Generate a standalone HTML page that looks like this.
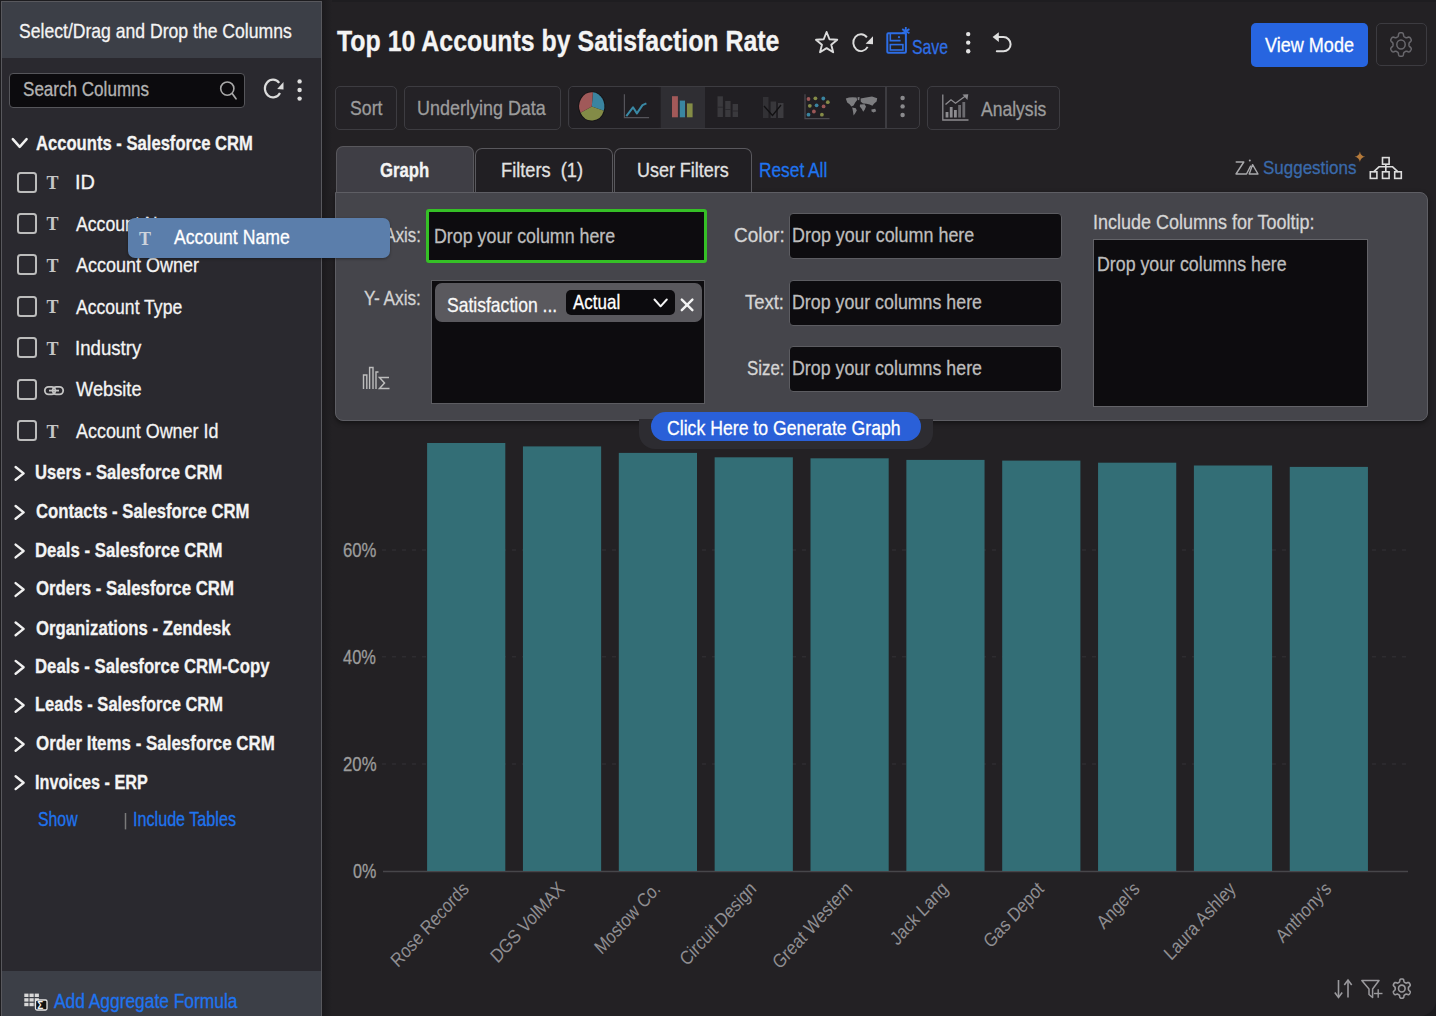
<!DOCTYPE html>
<html><head><meta charset="utf-8"><style>
html,body{margin:0;padding:0;width:1436px;height:1016px;overflow:hidden;background:#232124}
body{position:relative;font-family:"Liberation Sans",sans-serif}
.t{position:absolute;white-space:nowrap;line-height:1.117;transform-origin:0 0;-webkit-text-stroke:0.3px currentColor}
</style></head><body>
<div style="position:absolute;left:322px;top:0px;width:1114px;height:1.5px;background:#1e1d20"></div>
<div style="position:absolute;left:0px;top:0px;width:322px;height:1016px;background:#1d1c1f"></div>
<div style="position:absolute;left:1px;top:1px;width:321px;height:1015px;background:#2a292f;border:1px solid #58585d;border-bottom:none;box-sizing:border-box"></div>
<div style="position:absolute;left:2px;top:2px;width:319px;height:56px;background:#3c3f47"></div>
<div style="position:absolute;left:2px;top:971px;width:319px;height:45px;background:#3c3f47"></div>
<div style="position:absolute;left:322px;top:0px;width:10px;height:1016px;background:linear-gradient(to right,#1b1a1d,#232124)"></div>
<div style="position:absolute;left:8.5px;top:73px;width:236.5px;height:35px;background:#0c0b0e;border:1.5px solid #56565b;border-radius:4px;box-sizing:border-box"></div>
<div style="position:absolute;left:17px;top:171.5px;width:20px;height:21px;border:2px solid #bcbcbc;border-radius:3.5px;box-sizing:border-box"></div>
<div style="position:absolute;left:17px;top:212.98px;width:20px;height:21px;border:2px solid #bcbcbc;border-radius:3.5px;box-sizing:border-box"></div>
<div style="position:absolute;left:17px;top:254.45999999999998px;width:20px;height:21px;border:2px solid #bcbcbc;border-radius:3.5px;box-sizing:border-box"></div>
<div style="position:absolute;left:17px;top:295.94px;width:20px;height:21px;border:2px solid #bcbcbc;border-radius:3.5px;box-sizing:border-box"></div>
<div style="position:absolute;left:17px;top:337.41999999999996px;width:20px;height:21px;border:2px solid #bcbcbc;border-radius:3.5px;box-sizing:border-box"></div>
<div style="position:absolute;left:17px;top:378.9px;width:20px;height:21px;border:2px solid #bcbcbc;border-radius:3.5px;box-sizing:border-box"></div>
<div style="position:absolute;left:17px;top:420.38px;width:20px;height:21px;border:2px solid #bcbcbc;border-radius:3.5px;box-sizing:border-box"></div>
<div style="position:absolute;left:1406px;top:986px;width:30px;height:30px;background:#1c1b1e"></div>
<div style="position:absolute;left:1406px;top:986px;width:30px;height:30px;background:#232124;border-bottom-right-radius:16px"></div>
<div style="position:absolute;left:1250.6px;top:22.8px;width:117.6px;height:44px;background:#2765e0;border-radius:5px"></div>
<div style="position:absolute;left:1375.5px;top:23px;width:51.6px;height:43.4px;border:1.5px solid #3c3b40;border-radius:5px;box-sizing:border-box"></div>
<div style="position:absolute;left:335.2px;top:86px;width:61.5px;height:43.6px;border:1.5px solid #3d3c41;border-radius:5px;box-sizing:border-box;background:#242226"></div>
<div style="position:absolute;left:403.5px;top:86px;width:157.7px;height:43.6px;border:1.5px solid #3d3c41;border-radius:5px;box-sizing:border-box;background:#242226"></div>
<div style="position:absolute;left:568.4px;top:85.6px;width:351.7px;height:43.6px;border:1.5px solid #3d3c41;border-radius:5px;box-sizing:border-box;background:#242226"></div>
<div style="position:absolute;left:570px;top:87px;width:89.5px;height:40.6px;background:#201e22;border-radius:3px"></div>
<div style="position:absolute;left:661px;top:87px;width:43.5px;height:40.6px;background:#2f2e33"></div>
<div style="position:absolute;left:704.5px;top:87px;width:181px;height:40.6px;background:#211f23"></div>
<div style="position:absolute;left:885px;top:87px;width:1.5px;height:40.6px;background:#3d3c41"></div>
<div style="position:absolute;left:927.3px;top:86px;width:132.6px;height:43.6px;border:1.5px solid #3d3c41;border-radius:5px;box-sizing:border-box;background:#242226"></div>
<div style="position:absolute;left:335px;top:191.5px;width:1092.5px;height:229px;background:#45454b;border:1.5px solid #5e5e64;border-radius:0 8px 8px 8px;box-sizing:border-box;box-shadow:0 2px 5px rgba(0,0,0,.45)"></div>
<div style="position:absolute;left:335.5px;top:146px;width:138.5px;height:45.5px;background:#3f3e45;border:1.5px solid #59585d;border-bottom:none;border-radius:7px 7px 0 0;box-sizing:border-box"></div>
<div style="position:absolute;left:475px;top:148px;width:137.5px;height:44px;background:#211f23;border:1.5px solid #59585d;border-bottom:none;border-radius:7px 7px 0 0;box-sizing:border-box"></div>
<div style="position:absolute;left:613.5px;top:148px;width:138px;height:44px;background:#211f23;border:1.5px solid #59585d;border-bottom:none;border-radius:7px 7px 0 0;box-sizing:border-box"></div>
<div style="position:absolute;left:426.4px;top:209.1px;width:280.6px;height:53.8px;background:#0d0c0f;border:3px solid #35c026;border-radius:3px;box-sizing:border-box"></div>
<div style="position:absolute;left:431px;top:279.5px;width:274.3px;height:124.1px;background:#0d0c0f;border:1px solid #5c5c61;box-sizing:border-box"></div>
<div style="position:absolute;left:434.6px;top:283px;width:267px;height:39.4px;background:#5a595e;border-radius:7px"></div>
<div style="position:absolute;left:566.3px;top:290.4px;width:109.2px;height:25px;background:#0c0b0e;border-radius:5px"></div>
<div style="position:absolute;left:788.6px;top:212.7px;width:273.9px;height:46.30000000000001px;background:#0d0c0f;border:1px solid #5c5c61;border-radius:4px;box-sizing:border-box"></div>
<div style="position:absolute;left:788.6px;top:279.7px;width:273.9px;height:46.10000000000002px;background:#0d0c0f;border:1px solid #5c5c61;border-radius:4px;box-sizing:border-box"></div>
<div style="position:absolute;left:788.6px;top:345.9px;width:273.9px;height:46.400000000000034px;background:#0d0c0f;border:1px solid #5c5c61;border-radius:4px;box-sizing:border-box"></div>
<div style="position:absolute;left:1093.4px;top:239.3px;width:274.3px;height:168.2px;background:#0d0c0f;border:1px solid #636368;box-sizing:border-box"></div>
<div style="position:absolute;left:638.9px;top:419px;width:294.1px;height:29.5px;background:#2d2c31;border-radius:0 0 16px 16px"></div>
<div style="position:absolute;left:651.2px;top:412.4px;width:269.6px;height:29px;background:#2a60d8;border-radius:15px"></div>
<svg style="position:absolute;left:0;top:0" width="1436" height="1016"><line x1="382" y1="550.0" x2="1408" y2="550.0" stroke="#343337" stroke-width="1" stroke-dasharray="4 6"/><line x1="382" y1="656.8" x2="1408" y2="656.8" stroke="#343337" stroke-width="1" stroke-dasharray="4 6"/><line x1="382" y1="764.0" x2="1408" y2="764.0" stroke="#343337" stroke-width="1" stroke-dasharray="4 6"/><line x1="383" y1="871.5" x2="1408" y2="871.5" stroke="#47464a" stroke-width="1.5"/><rect x="427.10" y="443" width="78.2" height="428.0" fill="#336e76"/><rect x="522.95" y="446.4" width="78.2" height="424.6" fill="#336e76"/><rect x="618.80" y="452.9" width="78.2" height="418.1" fill="#336e76"/><rect x="714.65" y="457.3" width="78.2" height="413.7" fill="#336e76"/><rect x="810.50" y="458.3" width="78.2" height="412.7" fill="#336e76"/><rect x="906.35" y="459.9" width="78.2" height="411.1" fill="#336e76"/><rect x="1002.20" y="460.6" width="78.2" height="410.4" fill="#336e76"/><rect x="1098.05" y="462.7" width="78.2" height="408.3" fill="#336e76"/><rect x="1193.90" y="465.5" width="78.2" height="405.5" fill="#336e76"/><rect x="1289.75" y="466.9" width="78.2" height="404.1" fill="#336e76"/><text transform="translate(469.80,890) scale(1,1.09) rotate(-45) scale(0.89,1)" text-anchor="end" font-family="Liberation Sans" font-size="18" fill="#8f8e92">Rose Records</text><text transform="translate(565.65,890) scale(1,1.09) rotate(-45) scale(0.89,1)" text-anchor="end" font-family="Liberation Sans" font-size="18" fill="#8f8e92">DGS VolMAX</text><text transform="translate(661.50,890) scale(1,1.09) rotate(-45) scale(0.89,1)" text-anchor="end" font-family="Liberation Sans" font-size="18" fill="#8f8e92">Mostow Co.</text><text transform="translate(757.35,890) scale(1,1.09) rotate(-45) scale(0.89,1)" text-anchor="end" font-family="Liberation Sans" font-size="18" fill="#8f8e92">Circuit Design</text><text transform="translate(853.20,890) scale(1,1.09) rotate(-45) scale(0.89,1)" text-anchor="end" font-family="Liberation Sans" font-size="18" fill="#8f8e92">Great Western</text><text transform="translate(949.05,890) scale(1,1.09) rotate(-45) scale(0.89,1)" text-anchor="end" font-family="Liberation Sans" font-size="18" fill="#8f8e92">Jack Lang</text><text transform="translate(1044.90,890) scale(1,1.09) rotate(-45) scale(0.89,1)" text-anchor="end" font-family="Liberation Sans" font-size="18" fill="#8f8e92">Gas Depot</text><text transform="translate(1140.75,890) scale(1,1.09) rotate(-45) scale(0.89,1)" text-anchor="end" font-family="Liberation Sans" font-size="18" fill="#8f8e92">Angel&#39;s</text><text transform="translate(1236.60,890) scale(1,1.09) rotate(-45) scale(0.89,1)" text-anchor="end" font-family="Liberation Sans" font-size="18" fill="#8f8e92">Laura Ashley</text><text transform="translate(1332.45,890) scale(1,1.09) rotate(-45) scale(0.89,1)" text-anchor="end" font-family="Liberation Sans" font-size="18" fill="#8f8e92">Anthony&#39;s</text></svg>
<svg style="position:absolute;left:0;top:0" width="1436" height="1016"><circle cx="227.3" cy="88.6" r="6.6" fill="none" stroke="#a8a8a8" stroke-width="1.6"/><line x1="232.2" y1="93.6" x2="236" y2="98.8" stroke="#a8a8a8" stroke-width="1.7" stroke-linecap="round"/><path d="M280.01,92.91 A8.1,8.83 0 1 1 279.20,82.82" fill="none" stroke="#dcdcdc" stroke-width="2.2"/><polygon points="283.5,82.0 283.5,89.4 277.2,89.1" fill="#dcdcdc"/><circle cx="299.6" cy="81.4" r="2.2" fill="#dedede"/><circle cx="299.6" cy="90.0" r="2.2" fill="#dedede"/><circle cx="299.6" cy="98.6" r="2.2" fill="#dedede"/><polyline points="12.8,139.2 19.7,146.9 26.6,139.2" fill="none" stroke="#f0f0f0" stroke-width="2.5" stroke-linecap="round" stroke-linejoin="round"/><polyline points="15.6,467.0 23.6,473.4 15.6,479.8" fill="none" stroke="#f0f0f0" stroke-width="2.4" stroke-linecap="round" stroke-linejoin="round"/><polyline points="15.6,506.0 23.6,512.4 15.6,518.8" fill="none" stroke="#f0f0f0" stroke-width="2.4" stroke-linecap="round" stroke-linejoin="round"/><polyline points="15.6,544.6 23.6,551.0 15.6,557.4" fill="none" stroke="#f0f0f0" stroke-width="2.4" stroke-linecap="round" stroke-linejoin="round"/><polyline points="15.6,583.1 23.6,589.5 15.6,595.9" fill="none" stroke="#f0f0f0" stroke-width="2.4" stroke-linecap="round" stroke-linejoin="round"/><polyline points="15.6,622.5 23.6,628.9 15.6,635.3" fill="none" stroke="#f0f0f0" stroke-width="2.4" stroke-linecap="round" stroke-linejoin="round"/><polyline points="15.6,660.9 23.6,667.3 15.6,673.7" fill="none" stroke="#f0f0f0" stroke-width="2.4" stroke-linecap="round" stroke-linejoin="round"/><polyline points="15.6,698.9 23.6,705.3 15.6,711.7" fill="none" stroke="#f0f0f0" stroke-width="2.4" stroke-linecap="round" stroke-linejoin="round"/><polyline points="15.6,737.9 23.6,744.3 15.6,750.7" fill="none" stroke="#f0f0f0" stroke-width="2.4" stroke-linecap="round" stroke-linejoin="round"/><polyline points="15.6,776.3 23.6,782.7 15.6,789.1" fill="none" stroke="#f0f0f0" stroke-width="2.4" stroke-linecap="round" stroke-linejoin="round"/><rect x="44.8" y="386.8" width="10.6" height="7.6" rx="3.8" fill="none" stroke="#c4c4c4" stroke-width="1.8"/><rect x="52.6" y="386.8" width="10.6" height="7.6" rx="3.8" fill="none" stroke="#c4c4c4" stroke-width="1.8"/><line x1="49" y1="390.6" x2="59" y2="390.6" stroke="#c4c4c4" stroke-width="1.8"/><line x1="125.5" y1="813" x2="125.5" y2="829.4" stroke="#7a7a7a" stroke-width="1.5"/><rect x="24.3" y="993.6" width="4.2" height="3.4" fill="#d8d8d8"/><rect x="29.5" y="993.6" width="4.2" height="3.4" fill="#d8d8d8"/><rect x="34.7" y="993.6" width="4.2" height="3.4" fill="#d8d8d8"/><rect x="24.3" y="998.2" width="4.2" height="3.4" fill="#d8d8d8"/><rect x="29.5" y="998.2" width="4.2" height="3.4" fill="#d8d8d8"/><rect x="34.7" y="998.2" width="4.2" height="3.4" fill="#d8d8d8"/><rect x="24.3" y="1002.8" width="4.2" height="3.4" fill="#d8d8d8"/><rect x="29.5" y="1002.8" width="4.2" height="3.4" fill="#d8d8d8"/><rect x="34.7" y="1002.8" width="4.2" height="3.4" fill="#d8d8d8"/><rect x="35.5" y="1000" width="11.5" height="10" rx="1.5" fill="#111" stroke="#e8e8e8" stroke-width="1.3"/><text x="37.3" y="1009" font-family="Liberation Sans" font-size="10" font-weight="700" fill="#f0f0f0">Σ</text><polygon points="826.60,32.00 829.48,39.24 837.25,39.74 831.26,44.71 833.18,52.26 826.60,48.10 820.02,52.26 821.94,44.71 815.95,39.74 823.72,39.24" fill="none" stroke="#dcdcdc" stroke-width="1.9" stroke-linejoin="round"/><path d="M867.67,46.90 A7.7,8.39 0 1 1 866.90,37.31" fill="none" stroke="#dcdcdc" stroke-width="1.9"/><polygon points="873,36.2 873,44.2 865.6,43.8" fill="#dcdcdc"/><rect x="887.3" y="33.2" width="18.6" height="19.6" rx="1" fill="none" stroke="#2d6ee6" stroke-width="2"/><polyline points="890.3,33.5 890.3,40.6 900.6,40.6" fill="none" stroke="#2d6ee6" stroke-width="1.6"/><rect x="890.3" y="44.6" width="12.6" height="5.4" fill="none" stroke="#2d6ee6" stroke-width="1.6"/><circle cx="899" cy="37.2" r="1.1" fill="#2d6ee6"/><line x1="905.80" y1="27.00" x2="905.80" y2="35.40" stroke="#2d6ee6" stroke-width="1.8"/><line x1="902.16" y1="29.10" x2="909.44" y2="33.30" stroke="#2d6ee6" stroke-width="1.8"/><line x1="909.44" y1="29.10" x2="902.16" y2="33.30" stroke="#2d6ee6" stroke-width="1.8"/><circle cx="968.2" cy="34.1" r="2.2" fill="#e2e2e2"/><circle cx="968.2" cy="42.6" r="2.2" fill="#e2e2e2"/><circle cx="968.2" cy="51.2" r="2.2" fill="#e2e2e2"/><path d="M996.5,37.1 H1003.5 A7.1,7.1 0 0 1 1003.5,51.3 H996.8" fill="none" stroke="#dedede" stroke-width="2" stroke-linecap="round"/><polygon points="992.6,37.1 998.8,32.2 998.8,42" fill="#dedede"/><path d="M1401.00,32.74 L1401.39,32.75 L1401.78,32.79 L1402.17,32.86 L1402.54,32.98 L1402.89,33.22 L1403.20,33.64 L1403.41,34.34 L1403.54,35.18 L1403.67,35.88 L1403.83,36.32 L1404.04,36.59 L1404.27,36.78 L1404.51,36.93 L1404.76,37.08 L1405.00,37.23 L1405.24,37.37 L1405.48,37.52 L1405.73,37.66 L1406.00,37.78 L1406.33,37.83 L1406.77,37.77 L1407.41,37.53 L1408.17,37.23 L1408.85,37.07 L1409.36,37.13 L1409.73,37.34 L1410.02,37.62 L1410.27,37.93 L1410.49,38.27 L1410.70,38.62 L1410.89,38.98 L1411.05,39.35 L1411.19,39.74 L1411.27,40.14 L1411.25,40.58 L1411.05,41.07 L1410.58,41.61 L1409.96,42.16 L1409.44,42.62 L1409.16,42.99 L1409.05,43.31 L1409.01,43.62 L1409.00,43.91 L1409.00,44.21 L1409.00,44.50 L1409.00,44.79 L1409.00,45.09 L1409.01,45.38 L1409.05,45.69 L1409.16,46.01 L1409.44,46.38 L1409.96,46.84 L1410.58,47.39 L1411.05,47.93 L1411.25,48.42 L1411.27,48.86 L1411.19,49.26 L1411.05,49.65 L1410.89,50.02 L1410.70,50.38 L1410.49,50.73 L1410.27,51.07 L1410.02,51.38 L1409.73,51.66 L1409.36,51.87 L1408.85,51.93 L1408.17,51.77 L1407.41,51.47 L1406.77,51.23 L1406.33,51.17 L1406.00,51.22 L1405.73,51.34 L1405.48,51.48 L1405.24,51.63 L1405.00,51.77 L1404.76,51.92 L1404.51,52.07 L1404.27,52.22 L1404.04,52.41 L1403.83,52.68 L1403.67,53.12 L1403.54,53.82 L1403.41,54.66 L1403.20,55.36 L1402.89,55.78 L1402.54,56.02 L1402.17,56.14 L1401.78,56.21 L1401.39,56.25 L1401.00,56.26 L1400.61,56.25 L1400.22,56.21 L1399.83,56.14 L1399.46,56.02 L1399.11,55.78 L1398.80,55.36 L1398.59,54.66 L1398.46,53.82 L1398.33,53.12 L1398.17,52.68 L1397.96,52.41 L1397.73,52.22 L1397.49,52.07 L1397.24,51.92 L1397.00,51.77 L1396.76,51.63 L1396.52,51.48 L1396.27,51.34 L1396.00,51.22 L1395.67,51.17 L1395.23,51.23 L1394.59,51.47 L1393.83,51.77 L1393.15,51.93 L1392.64,51.87 L1392.27,51.66 L1391.98,51.38 L1391.73,51.07 L1391.51,50.73 L1391.30,50.38 L1391.11,50.02 L1390.95,49.65 L1390.81,49.26 L1390.73,48.86 L1390.75,48.42 L1390.95,47.93 L1391.42,47.39 L1392.04,46.84 L1392.56,46.38 L1392.84,46.01 L1392.95,45.69 L1392.99,45.38 L1393.00,45.09 L1393.00,44.79 L1393.00,44.50 L1393.00,44.21 L1393.00,43.91 L1392.99,43.62 L1392.95,43.31 L1392.84,42.99 L1392.56,42.62 L1392.04,42.16 L1391.42,41.61 L1390.95,41.07 L1390.75,40.58 L1390.73,40.14 L1390.81,39.74 L1390.95,39.35 L1391.11,38.98 L1391.30,38.62 L1391.51,38.27 L1391.73,37.93 L1391.98,37.62 L1392.27,37.34 L1392.64,37.13 L1393.15,37.07 L1393.83,37.23 L1394.59,37.53 L1395.23,37.77 L1395.67,37.83 L1396.00,37.78 L1396.27,37.66 L1396.52,37.52 L1396.76,37.37 L1397.00,37.23 L1397.24,37.08 L1397.49,36.93 L1397.73,36.78 L1397.96,36.59 L1398.17,36.32 L1398.33,35.88 L1398.46,35.18 L1398.59,34.34 L1398.80,33.64 L1399.11,33.22 L1399.46,32.98 L1399.83,32.86 L1400.22,32.79 L1400.61,32.75Z" fill="none" stroke="#69686d" stroke-width="1.5" stroke-linejoin="round"/><ellipse cx="1401" cy="44.5" rx="4.2" ry="4.41" fill="none" stroke="#69686d" stroke-width="1.5"/><ellipse cx="591.8" cy="106.4" rx="13.6" ry="15" fill="#151416"/><g transform="translate(591.8,106.4) scale(1,1.12) translate(-591.8,-106.4)"><path d="M591.8,106.4 L592.90,93.85 A12.6,12.6 0 0 1 603.78,110.29 Z" fill="#3a84a0"/><path d="M591.8,106.4 L603.78,110.29 A12.6,12.6 0 0 1 580.57,112.12 Z" fill="#838b47"/><path d="M591.8,106.4 L580.57,112.12 A12.6,12.6 0 0 1 592.90,93.85 Z" fill="#a05959"/></g><polyline points="624.4,94.3 624.4,117.7 649.1,117.7" fill="none" stroke="#55545a" stroke-width="1.2"/><polyline points="626.3,116.2 633,107.3 636.9,113.4 642.5,105.1 646.4,103.4" fill="none" stroke="#3a8aa6" stroke-width="2" stroke-linejoin="round"/><rect x="672" y="96.2" width="5.9" height="21.1" fill="#a25959"/><rect x="679.8" y="100.6" width="5.2" height="16.7" fill="#3a86a1"/><rect x="687" y="103.4" width="5.6" height="13.9" fill="#848c46"/><rect x="717.5" y="96.3" width="5.4" height="20.7" fill="#3a393d"/><rect x="717.5" y="106.7" width="5.4" height="1" fill="#2a292d"/><rect x="725.2" y="101" width="5.4" height="16.0" fill="#3a393d"/><rect x="725.2" y="109.0" width="5.4" height="1" fill="#2a292d"/><rect x="732.6" y="104" width="5.4" height="13.0" fill="#3a393d"/><rect x="732.6" y="110.5" width="5.4" height="1" fill="#2a292d"/><rect x="763" y="97" width="5.5" height="21" fill="#323135"/><rect x="770.6" y="101.5" width="5.5" height="16.5" fill="#38373b"/><rect x="778" y="103" width="5.5" height="15" fill="#3c3b3f"/><polyline points="764,106 772.5,115.5 781,105" fill="none" stroke="#121113" stroke-width="1.3"/><polyline points="805,94.2 805,118.6 829.5,118.6" fill="none" stroke="#4b4a50" stroke-width="1.2"/><circle cx="808.5" cy="99" r="1.9" fill="#9b5757"/><circle cx="815.4" cy="98.3" r="1.9" fill="#858c48"/><circle cx="823.3" cy="98.5" r="1.9" fill="#3a84a0"/><circle cx="827.8" cy="102.2" r="1.9" fill="#858c48"/><circle cx="809.8" cy="105.8" r="1.9" fill="#858c48"/><circle cx="816.6" cy="105.3" r="1.9" fill="#3a84a0"/><circle cx="823.6" cy="106.4" r="1.9" fill="#9b5757"/><circle cx="813.9" cy="111.5" r="1.9" fill="#9b5757"/><circle cx="808.5" cy="114.7" r="1.9" fill="#3a84a0"/><circle cx="821.9" cy="114.7" r="1.9" fill="#858c48"/><path d="M845.8,98.6 Q850,96.8 856.5,97.6 L857.2,100 L855.2,102.6 L853.6,105.5 L851.4,106.6 L849.6,104.2 L847.2,102.4 Z" fill="#7d7d80"/><path d="M852.2,107.4 L855.8,108.2 L856.8,110.4 L855.2,113.2 L853.6,115.4 L853,111.6 Z" fill="#7d7d80"/><path d="M857.6,97.2 L859.6,97 L859.2,100.2 L857.8,100 Z" fill="#7d7d80"/><path d="M860.6,98.6 L866,97.6 L872,96.6 L877.2,98.2 L876.6,101.4 L874.2,103.6 L872.4,105.8 L869.6,104.4 L866.4,103.8 L863,103.6 L860.8,101.8 Z" fill="#7d7d80"/><path d="M860,104.4 L864.6,104.2 L866,106.6 L864.8,109.6 L863.2,111.8 L861.8,109 L859.8,106.6 Z" fill="#7d7d80"/><path d="M871.4,109.4 L875.2,108.8 L876.2,111.2 L873.6,112.4 L871.6,111.6 Z" fill="#7d7d80"/><circle cx="902.6" cy="98" r="2.2" fill="#8a8a8d"/><circle cx="902.6" cy="106.4" r="2.2" fill="#8a8a8d"/><circle cx="902.6" cy="115" r="2.2" fill="#8a8a8d"/><polyline points="942.8,94.5 942.8,120 968.5,120" fill="none" stroke="#8d8c90" stroke-width="1.3"/><rect x="945.6" y="112" width="2.8" height="5.5" fill="#8d8c90"/><rect x="949.8" y="107" width="2.8" height="10.5" fill="#8d8c90"/><rect x="954" y="110" width="2.8" height="7.5" fill="#8d8c90"/><rect x="958.2" y="105" width="2.8" height="12.5" fill="#6c6b6f"/><rect x="962.4" y="102" width="2.8" height="15.5" fill="#6c6b6f"/><polyline points="945.5,104.5 951,99.8 955.5,103.2 966.5,95.2" fill="none" stroke="#8d8c90" stroke-width="1.4"/><polygon points="968.3,94.2 962.5,94.6 967.4,100" fill="#8d8c90"/><path d="M1236.2,162 H1243.8 L1236,174 H1246.5 L1250.6,166.2" fill="none" stroke="#a9a9ac" stroke-width="1.4" stroke-linejoin="round" stroke-linecap="round"/><path d="M1249.2,174 L1252.6,164.6 L1258,174 Z" fill="none" stroke="#a9a9ac" stroke-width="1.4" stroke-linejoin="round"/><circle cx="1249.8" cy="160.4" r="1" fill="#a9a9ac"/><path d="M1359.9,151.5 Q1360.6,156.1 1365.2,156.8 Q1360.6,157.5 1359.9,162.1 Q1359.2,157.5 1354.6,156.8 Q1359.2,156.1 1359.9,151.5 Z" fill="#b57a3a"/><rect x="1382.5" y="157.6" width="6.6" height="6.6" fill="none" stroke="#dcdcdc" stroke-width="1.6"/><rect x="1370.3" y="171.8" width="6.6" height="6.6" fill="none" stroke="#dcdcdc" stroke-width="1.6"/><rect x="1382.5" y="171.8" width="6.6" height="6.6" fill="none" stroke="#dcdcdc" stroke-width="1.6"/><rect x="1394.7" y="171.8" width="6.6" height="6.6" fill="none" stroke="#dcdcdc" stroke-width="1.6"/><polyline points="1373.6,171.8 1379,166.8 1385.8,166.8 1385.8,164.2" fill="none" stroke="#dcdcdc" stroke-width="1.6"/><polyline points="1398,171.8 1392.6,166.8 1385.8,166.8 1385.8,171.8" fill="none" stroke="#dcdcdc" stroke-width="1.6"/><polyline points="654.5,299.5 660.6,306.3 666.8,299.5" fill="none" stroke="#f4f4f4" stroke-width="2" stroke-linecap="round" stroke-linejoin="round"/><line x1="681.8" y1="299.6" x2="692.4" y2="310.2" stroke="#f4f4f4" stroke-width="2.4" stroke-linecap="round"/><line x1="692.4" y1="299.6" x2="681.8" y2="310.2" stroke="#f4f4f4" stroke-width="2.4" stroke-linecap="round"/><polyline points="363.5,389 363.5,375 366.8,375 366.8,389" fill="none" stroke="#bdbdbd" stroke-width="1.4"/><polyline points="369.6,389 369.6,367.5 373,367.5 373,389" fill="none" stroke="#bdbdbd" stroke-width="1.4"/><polyline points="376,389 376,372 378.5,372" fill="none" stroke="#bdbdbd" stroke-width="1.4"/><path d="M389,377.5 H379.5 L384.5,383 L379.5,388.6 H389.5" fill="none" stroke="#bdbdbd" stroke-width="1.5"/><line x1="1338.5" y1="980" x2="1338.5" y2="997" stroke="#9a999d" stroke-width="1.6"/><polyline points="1334.8,992.5 1338.5,997.5 1342.2,992.5" fill="none" stroke="#9a999d" stroke-width="1.6"/><line x1="1348" y1="980.5" x2="1348" y2="997.5" stroke="#9a999d" stroke-width="1.6"/><polyline points="1344.3,985 1348,980 1351.7,985" fill="none" stroke="#9a999d" stroke-width="1.6"/><path d="M1361.8,980.5 H1379 L1372.6,989 V997.5 L1369,994.5 V989 Z" fill="none" stroke="#9a999d" stroke-width="1.5" stroke-linejoin="round"/><line x1="1374" y1="993.5" x2="1382.5" y2="993.5" stroke="#9a999d" stroke-width="1.4"/><line x1="1378.2" y1="989.3" x2="1378.2" y2="997.7" stroke="#9a999d" stroke-width="1.4"/><path d="M1401.80,978.94 L1402.12,978.95 L1402.44,978.98 L1402.76,979.04 L1403.07,979.14 L1403.36,979.33 L1403.61,979.68 L1403.78,980.24 L1403.89,980.93 L1404.00,981.50 L1404.14,981.86 L1404.31,982.08 L1404.50,982.23 L1404.70,982.36 L1404.90,982.48 L1405.10,982.60 L1405.30,982.72 L1405.50,982.84 L1405.70,982.96 L1405.93,983.06 L1406.19,983.10 L1406.56,983.05 L1407.08,982.86 L1407.70,982.62 L1408.26,982.50 L1408.67,982.55 L1408.97,982.72 L1409.21,982.95 L1409.41,983.21 L1409.60,983.48 L1409.77,983.77 L1409.92,984.07 L1410.06,984.37 L1410.17,984.69 L1410.24,985.02 L1410.23,985.38 L1410.06,985.78 L1409.68,986.23 L1409.17,986.67 L1408.76,987.05 L1408.53,987.35 L1408.44,987.62 L1408.41,987.87 L1408.40,988.12 L1408.40,988.36 L1408.40,988.60 L1408.40,988.84 L1408.40,989.08 L1408.41,989.33 L1408.44,989.58 L1408.53,989.85 L1408.76,990.15 L1409.17,990.53 L1409.68,990.97 L1410.06,991.42 L1410.23,991.82 L1410.24,992.18 L1410.17,992.51 L1410.06,992.83 L1409.92,993.13 L1409.77,993.43 L1409.60,993.72 L1409.41,993.99 L1409.21,994.25 L1408.97,994.48 L1408.67,994.65 L1408.26,994.70 L1407.70,994.58 L1407.08,994.34 L1406.56,994.15 L1406.19,994.10 L1405.93,994.14 L1405.70,994.24 L1405.50,994.36 L1405.30,994.48 L1405.10,994.60 L1404.90,994.72 L1404.70,994.84 L1404.50,994.97 L1404.31,995.12 L1404.14,995.34 L1404.00,995.70 L1403.89,996.27 L1403.78,996.96 L1403.61,997.52 L1403.36,997.87 L1403.07,998.06 L1402.76,998.16 L1402.44,998.22 L1402.12,998.25 L1401.80,998.26 L1401.48,998.25 L1401.16,998.22 L1400.84,998.16 L1400.53,998.06 L1400.24,997.87 L1399.99,997.52 L1399.82,996.96 L1399.71,996.27 L1399.60,995.70 L1399.46,995.34 L1399.29,995.12 L1399.10,994.97 L1398.90,994.84 L1398.70,994.72 L1398.50,994.60 L1398.30,994.48 L1398.10,994.36 L1397.90,994.24 L1397.67,994.14 L1397.41,994.10 L1397.04,994.15 L1396.52,994.34 L1395.90,994.58 L1395.34,994.70 L1394.93,994.65 L1394.63,994.48 L1394.39,994.25 L1394.19,993.99 L1394.00,993.72 L1393.83,993.43 L1393.68,993.13 L1393.54,992.83 L1393.43,992.51 L1393.36,992.18 L1393.37,991.82 L1393.54,991.42 L1393.92,990.97 L1394.43,990.53 L1394.84,990.15 L1395.07,989.85 L1395.16,989.58 L1395.19,989.33 L1395.20,989.08 L1395.20,988.84 L1395.20,988.60 L1395.20,988.36 L1395.20,988.12 L1395.19,987.87 L1395.16,987.62 L1395.07,987.35 L1394.84,987.05 L1394.43,986.67 L1393.92,986.23 L1393.54,985.78 L1393.37,985.38 L1393.36,985.02 L1393.43,984.69 L1393.54,984.37 L1393.68,984.07 L1393.83,983.77 L1394.00,983.48 L1394.19,983.21 L1394.39,982.95 L1394.63,982.72 L1394.93,982.55 L1395.34,982.50 L1395.90,982.62 L1396.52,982.86 L1397.04,983.05 L1397.41,983.10 L1397.67,983.06 L1397.90,982.96 L1398.10,982.84 L1398.30,982.72 L1398.50,982.60 L1398.70,982.48 L1398.90,982.36 L1399.10,982.23 L1399.29,982.08 L1399.46,981.86 L1399.60,981.50 L1399.71,980.93 L1399.82,980.24 L1399.99,979.68 L1400.24,979.33 L1400.53,979.14 L1400.84,979.04 L1401.16,978.98 L1401.48,978.95Z" fill="none" stroke="#9a999d" stroke-width="1.6" stroke-linejoin="round"/><ellipse cx="1401.8" cy="988.6" rx="3.3" ry="3.46" fill="none" stroke="#9a999d" stroke-width="1.6"/><text x="46.4" y="188.90" font-family="Liberation Serif" font-weight="700" font-size="18" fill="#c6c6c6">T</text><text x="46.4" y="230.38" font-family="Liberation Serif" font-weight="700" font-size="18" fill="#c6c6c6">T</text><text x="46.4" y="271.86" font-family="Liberation Serif" font-weight="700" font-size="18" fill="#c6c6c6">T</text><text x="46.4" y="313.34" font-family="Liberation Serif" font-weight="700" font-size="18" fill="#c6c6c6">T</text><text x="46.4" y="354.82" font-family="Liberation Serif" font-weight="700" font-size="18" fill="#c6c6c6">T</text><text x="46.4" y="437.78" font-family="Liberation Serif" font-weight="700" font-size="18" fill="#c6c6c6">T</text></svg>
<div class="t" style="left:18.90px;top:19.66px;font-size:20.49px;font-weight:400;color:#f4f4f4;transform:scaleX(0.8585);">Select/Drag and Drop the Columns</div>
<div class="t" style="left:22.70px;top:77.96px;font-size:20.49px;font-weight:400;color:#b3b3b3;transform:scaleX(0.8328);">Search Columns</div>
<div class="t" style="left:36.10px;top:131.39px;font-size:20.78px;font-weight:700;color:#f4f4f4;transform:scaleX(0.8000);">Accounts - Salesforce CRM</div>
<div class="t" style="left:74.53px;top:171.06px;font-size:20.49px;font-weight:400;color:#f4f4f4;transform:scaleX(0.9737);">ID</div>
<div class="t" style="left:75.50px;top:212.54px;font-size:20.49px;font-weight:400;color:#f4f4f4;transform:scaleX(0.8622);">Account Name</div>
<div class="t" style="left:75.50px;top:254.02px;font-size:20.49px;font-weight:400;color:#f4f4f4;transform:scaleX(0.8786);">Account Owner</div>
<div class="t" style="left:75.50px;top:295.50px;font-size:20.49px;font-weight:400;color:#f4f4f4;transform:scaleX(0.8584);">Account Type</div>
<div class="t" style="left:74.59px;top:336.98px;font-size:20.49px;font-weight:400;color:#f4f4f4;transform:scaleX(0.9088);">Industry</div>
<div class="t" style="left:75.50px;top:378.46px;font-size:20.49px;font-weight:400;color:#f4f4f4;transform:scaleX(0.8903);">Website</div>
<div class="t" style="left:75.50px;top:419.94px;font-size:20.49px;font-weight:400;color:#f4f4f4;transform:scaleX(0.8749);">Account Owner Id</div>
<div class="t" style="left:35.40px;top:460.39px;font-size:20.78px;font-weight:700;color:#f4f4f4;transform:scaleX(0.8001);">Users - Salesforce CRM</div>
<div class="t" style="left:36.20px;top:499.39px;font-size:20.78px;font-weight:700;color:#f4f4f4;transform:scaleX(0.8046);">Contacts - Salesforce CRM</div>
<div class="t" style="left:35.39px;top:537.99px;font-size:20.78px;font-weight:700;color:#f4f4f4;transform:scaleX(0.8081);">Deals - Salesforce CRM</div>
<div class="t" style="left:36.20px;top:576.49px;font-size:20.78px;font-weight:700;color:#f4f4f4;transform:scaleX(0.8091);">Orders - Salesforce CRM</div>
<div class="t" style="left:36.20px;top:615.89px;font-size:20.78px;font-weight:700;color:#f4f4f4;transform:scaleX(0.8071);">Organizations - Zendesk</div>
<div class="t" style="left:35.39px;top:654.29px;font-size:20.78px;font-weight:700;color:#f4f4f4;transform:scaleX(0.8062);">Deals - Salesforce CRM-Copy</div>
<div class="t" style="left:35.41px;top:692.29px;font-size:20.78px;font-weight:700;color:#f4f4f4;transform:scaleX(0.7948);">Leads - Salesforce CRM</div>
<div class="t" style="left:36.20px;top:731.29px;font-size:20.78px;font-weight:700;color:#f4f4f4;transform:scaleX(0.8149);">Order Items - Salesforce CRM</div>
<div class="t" style="left:35.42px;top:769.69px;font-size:20.78px;font-weight:700;color:#f4f4f4;transform:scaleX(0.7817);">Invoices - ERP</div>
<div class="t" style="left:37.80px;top:807.96px;font-size:20.49px;font-weight:400;color:#1f74f0;transform:scaleX(0.7717);">Show</div>
<div class="t" style="left:132.91px;top:807.96px;font-size:20.49px;font-weight:400;color:#1f74f0;transform:scaleX(0.7887);">Include Tables</div>
<div class="t" style="left:53.80px;top:990.48px;font-size:19.91px;font-weight:400;color:#1f74f0;transform:scaleX(0.8724);">Add Aggregate Formula</div>
<div class="t" style="left:336.70px;top:23.91px;font-size:30.38px;font-weight:700;color:#f4f4f4;transform:scaleX(0.8191);">Top 10 Accounts by Satisfaction Rate</div>
<div class="t" style="left:912.10px;top:34.99px;font-size:20.78px;font-weight:400;color:#2f6fe6;transform:scaleX(0.7610);">Save</div>
<div class="t" style="left:1265.00px;top:34.12px;font-size:20.2px;font-weight:400;color:#ffffff;transform:scaleX(0.8945);">View Mode</div>
<div class="t" style="left:349.50px;top:97.16px;font-size:20.49px;font-weight:400;color:#9c9c9c;transform:scaleX(0.8633);">Sort</div>
<div class="t" style="left:417.02px;top:97.16px;font-size:20.49px;font-weight:400;color:#9c9c9c;transform:scaleX(0.8772);">Underlying Data</div>
<div class="t" style="left:981.10px;top:97.66px;font-size:20.49px;font-weight:400;color:#9c9c9c;transform:scaleX(0.8562);">Analysis</div>
<div class="t" style="left:380.10px;top:158.86px;font-size:20.49px;font-weight:700;color:#f4f4f4;transform:scaleX(0.8176);">Graph</div>
<div class="t" style="left:501.11px;top:158.86px;font-size:20.49px;font-weight:400;color:#e2e2e2;transform:scaleX(0.8898);">Filters  (1)</div>
<div class="t" style="left:636.52px;top:158.86px;font-size:20.49px;font-weight:400;color:#e2e2e2;transform:scaleX(0.8757);">User Filters</div>
<div class="t" style="left:758.96px;top:158.86px;font-size:20.49px;font-weight:400;color:#1f74f0;transform:scaleX(0.8444);">Reset All</div>
<div class="t" style="left:1262.90px;top:158.07px;font-size:18.6px;font-weight:400;color:#3a6aab;transform:scaleX(0.9134);">Suggestions</div>
<div class="t" style="left:364.00px;top:224.46px;font-size:20.49px;font-weight:400;color:#d2d2d2;transform:scaleX(0.8189);">X- Axis:</div>
<div class="t" style="left:433.73px;top:224.56px;font-size:20.49px;font-weight:400;color:#bdbdbd;transform:scaleX(0.8697);">Drop your column here</div>
<div class="t" style="left:364.00px;top:286.76px;font-size:20.49px;font-weight:400;color:#d2d2d2;transform:scaleX(0.8419);">Y- Axis:</div>
<div class="t" style="left:447.30px;top:293.56px;font-size:20.49px;font-weight:400;color:#f8f8f8;transform:scaleX(0.8561);">Satisfaction ...</div>
<div class="t" style="left:572.50px;top:290.86px;font-size:20.49px;font-weight:400;color:#ffffff;transform:scaleX(0.8283);">Actual</div>
<div class="t" style="left:733.57px;top:224.26px;font-size:20.49px;font-weight:400;color:#d5d5d5;transform:scaleX(0.9278);">Color:</div>
<div class="t" style="left:792.12px;top:224.26px;font-size:20.49px;font-weight:400;color:#bdbdbd;transform:scaleX(0.8750);">Drop your column here</div>
<div class="t" style="left:745.30px;top:291.26px;font-size:20.49px;font-weight:400;color:#d5d5d5;transform:scaleX(0.8997);">Text:</div>
<div class="t" style="left:792.13px;top:291.26px;font-size:20.49px;font-weight:400;color:#bdbdbd;transform:scaleX(0.8692);">Drop your columns here</div>
<div class="t" style="left:746.60px;top:357.46px;font-size:20.49px;font-weight:400;color:#d5d5d5;transform:scaleX(0.8233);">Size:</div>
<div class="t" style="left:792.13px;top:357.46px;font-size:20.49px;font-weight:400;color:#bdbdbd;transform:scaleX(0.8692);">Drop your columns here</div>
<div class="t" style="left:1092.82px;top:210.56px;font-size:20.49px;font-weight:400;color:#d5d5d5;transform:scaleX(0.8777);">Include Columns for Tooltip:</div>
<div class="t" style="left:1097.13px;top:253.36px;font-size:20.49px;font-weight:400;color:#bdbdbd;transform:scaleX(0.8674);">Drop your columns here</div>
<div class="t" style="left:667.06px;top:415.62px;font-size:21.08px;font-weight:400;color:#ffffff;transform:scaleX(0.8380);">Click Here to Generate Graph</div>
<div class="t" style="left:342.96px;top:538.68px;font-size:19.91px;font-weight:400;color:#9c9c9c;transform:scaleX(0.8390);">60%</div>
<div class="t" style="left:343.40px;top:646.08px;font-size:19.91px;font-weight:400;color:#9c9c9c;transform:scaleX(0.8252);">40%</div>
<div class="t" style="left:342.76px;top:752.78px;font-size:19.91px;font-weight:400;color:#9c9c9c;transform:scaleX(0.8416);">20%</div>
<div class="t" style="left:353.00px;top:859.88px;font-size:19.91px;font-weight:400;color:#9c9c9c;transform:scaleX(0.8087);">0%</div>
<div style="position:absolute;left:128px;top:217.5px;width:262px;height:40px;background:#5b7eab;border-radius:7px;box-shadow:0 1px 3px rgba(0,0,0,.35)"></div>
<svg style="position:absolute;left:0;top:0" width="1436" height="1016"><text x="139" y="244.6" font-family="Liberation Serif" font-weight="700" font-size="18" fill="#cdd3dc">T</text></svg>
<div class="t" style="left:174.30px;top:226.26px;font-size:20.49px;font-weight:400;color:#ffffff;transform:scaleX(0.8615);">Account Name</div>
</body></html>
